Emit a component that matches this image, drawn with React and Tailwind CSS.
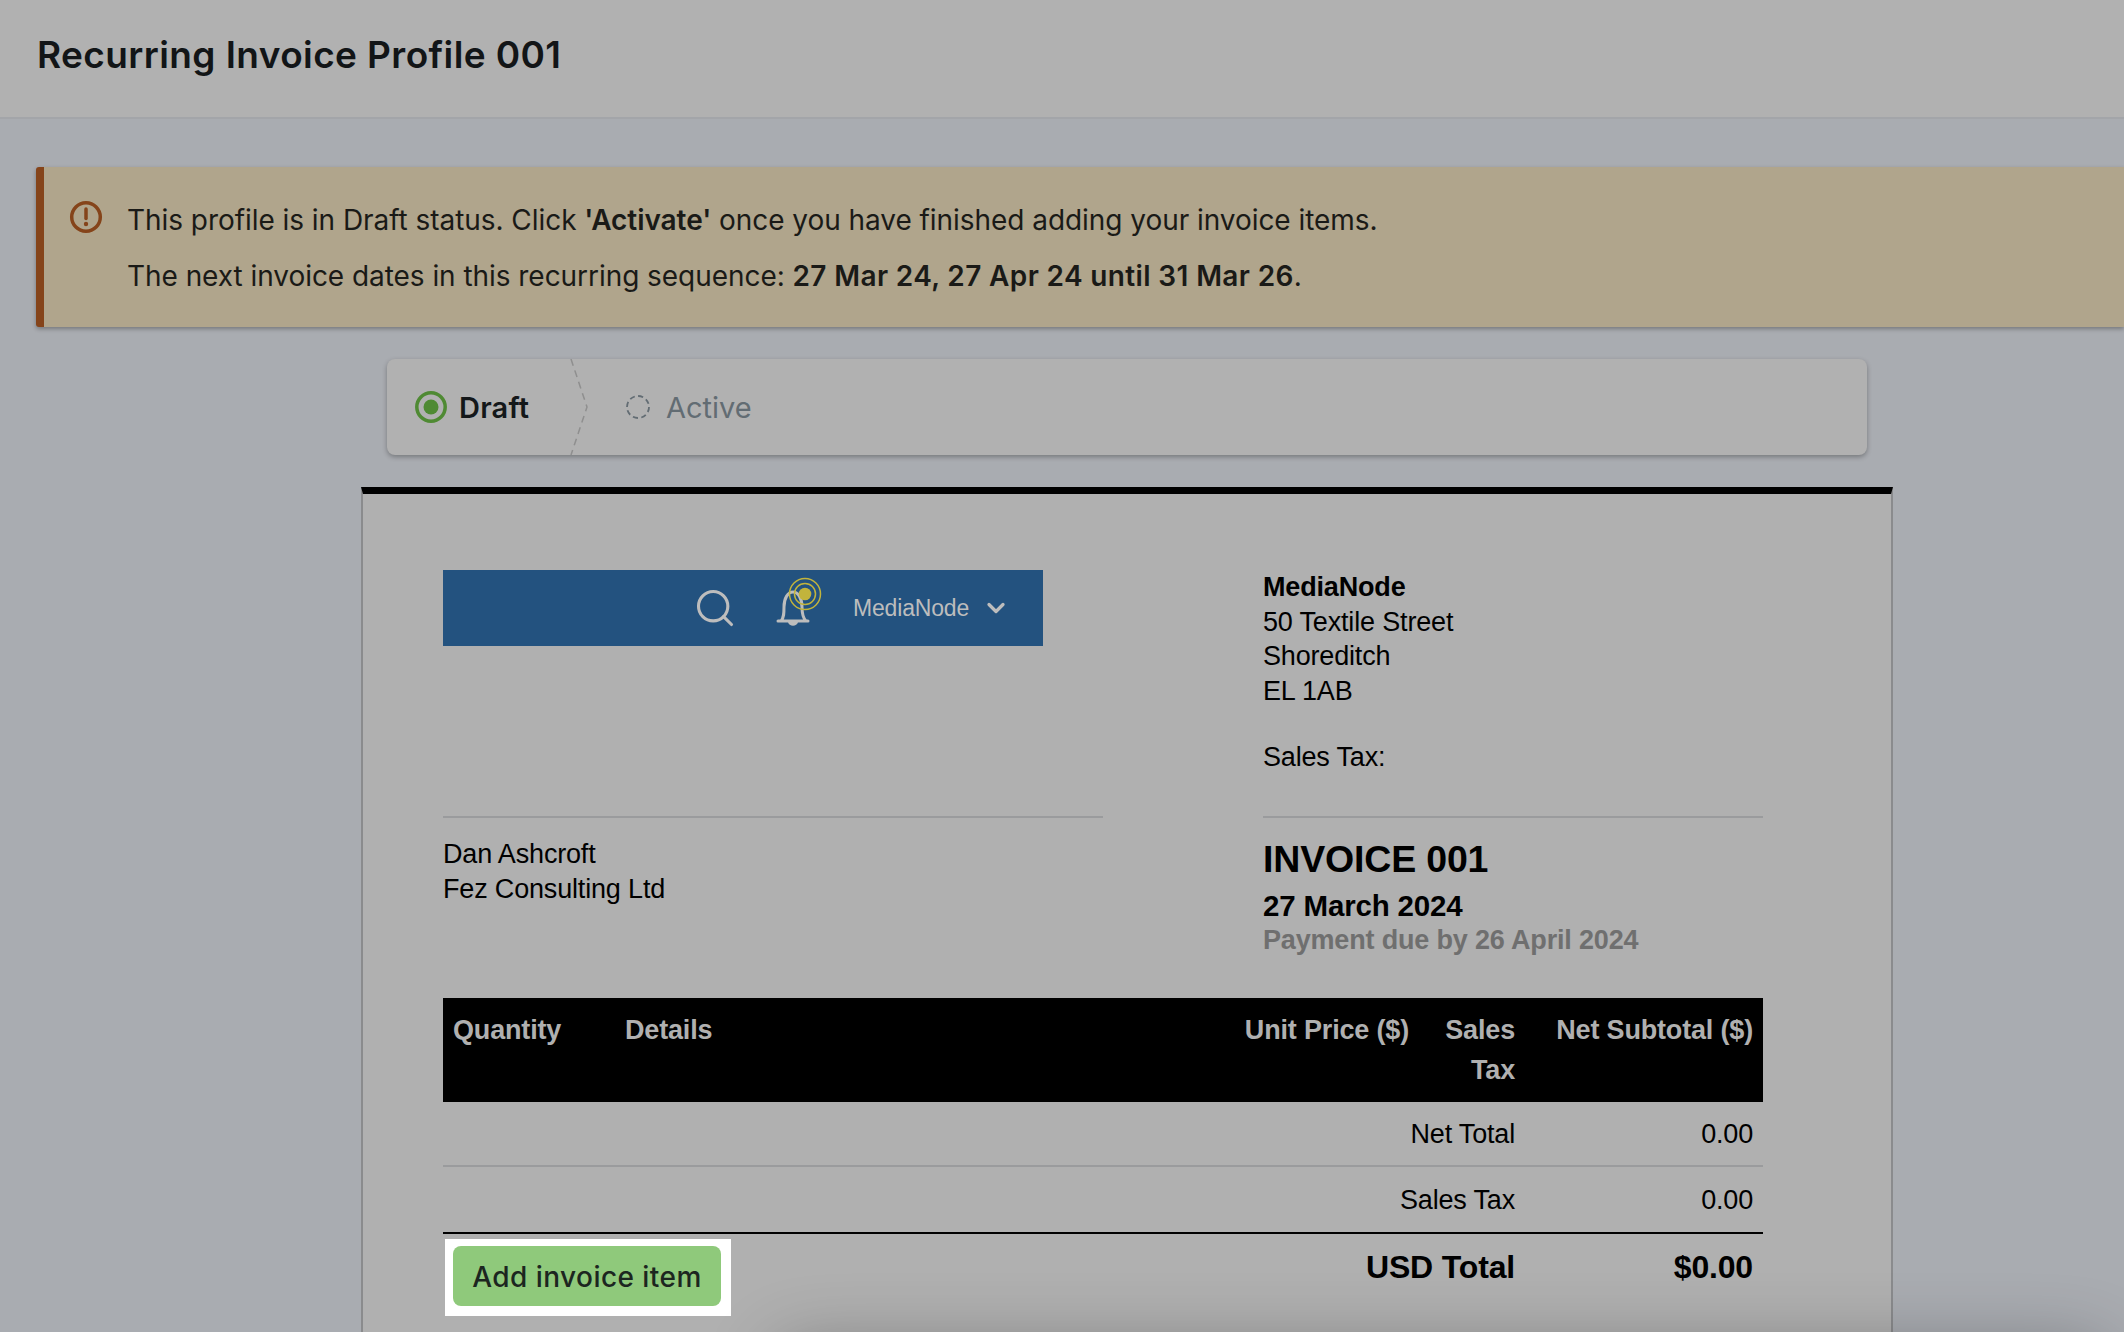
import { ChevronDown, Search } from "lucide-react";

const headFont = "font-['Inter',sans-serif]";
const docFont = "font-['Liberation_Sans',Arial,sans-serif]";

function Bell() {
    return (
        <svg width="50" height="52" viewBox="0 0 50 52" fill="none" className="block">
            <path d="M2 45h30M5 45c3-3 3-8 3-14 0-9 4-15 9-15s9 6 9 15c0 6 1 11 4 14" stroke="#bdbdbd" strokeWidth="3" strokeLinecap="round" strokeLinejoin="round" />
            <path d="M12 46c1 5 9 5 10 0z" fill="#bdbdbd" />
            <circle cx="29" cy="18" r="6.3" fill="#c2b43c" />
            <circle cx="29" cy="18" r="10.5" stroke="#c2b43c" strokeWidth="1.5" />
            <circle cx="29" cy="18" r="15.5" stroke="#c2b43c" strokeWidth="1.5" />
        </svg>
    );
}

function Stepper() {
    return (
        <div className={`ml-[351px] mt-[32px] flex h-[96px] w-[1480px] items-center rounded-lg bg-[#b1b1b1] shadow-[0_2px_5px_rgba(0,0,0,0.3)] ${headFont}`}>
            <svg width="32" height="32" viewBox="0 0 32 32" fill="none" className="ml-[28px]">
                <circle cx="16" cy="16" r="14.2" stroke="#4f8a33" strokeWidth="3.5" />
                <circle cx="16" cy="16" r="7.5" fill="#4f8a33" />
            </svg>
            <span className="ml-[12px] mt-[1px] w-[71px] text-[29px] font-semibold tracking-[0.2px] text-[#14181a]">Draft</span>
            <svg width="20" height="96" viewBox="0 0 20 96" fill="none" className="ml-[39px]">
                <path d="M2 0L18 48L2 96" stroke="#8f8f8f" strokeWidth="1.5" strokeDasharray="7 5" />
            </svg>
            <svg width="26" height="26" viewBox="0 0 26 26" fill="none" className="ml-[36px]">
                <circle cx="13" cy="13" r="11" stroke="#626c73" strokeWidth="1.8" strokeDasharray="5.2 3.4" />
            </svg>
            <span className="ml-[15px] mt-[1px] text-[29px] text-[#626c73]">Active</span>
        </div>
    );
}

function TotalRow({ label, value, border, top }) {
    return (
        <div className={`grid h-[65px] grid-cols-[1fr_237px] text-[27px] leading-[35px] ${top} ${border}`}>
            <div className="pr-[11px] text-right">{label}</div>
            <div className="pr-[10px] text-right">{value}</div>
        </div>
    );
}

export default function App() {
    return (
        <div className="relative h-[1332px] w-full overflow-hidden bg-[#a9acb1]">
            <div className={`flex h-[119px] items-center border-b-2 border-[#a3a5a9] bg-[#b1b1b1] pb-[8px] pl-[37px] text-[37px] font-semibold tracking-[0.4px] text-[#121517] ${headFont}`}>
                Recurring Invoice Profile 001
            </div>

            <div className="pl-[36px] pt-[48px]">
                <div className={`flex h-[160px] rounded-l-[3px] border-l-8 border-[#85441a] bg-[#b0a58c] pl-[25px] pt-[34px] text-[28px] tracking-[-0.05px] text-[#1a1a17] shadow-[0_2px_4px_rgba(0,0,0,0.3)] ${headFont}`}>
                    <svg width="34" height="34" viewBox="0 0 34 34" fill="none" className="mt-[-1px]">
                        <circle cx="17" cy="17" r="14.3" stroke="#85441a" strokeWidth="3.5" />
                        <path d="M17 9v9.5" stroke="#85441a" strokeWidth="3.5" strokeLinecap="round" />
                        <circle cx="17" cy="24" r="2.2" fill="#85441a" />
                    </svg>
                    <div className="ml-[24px] mt-[-9px] leading-[56px]">
                        <p>This profile is in Draft status. Click <b className="font-semibold">'Activate'</b> once you have finished adding your invoice items.</p>
                        <p>The next invoice dates in this recurring sequence: <b className="font-semibold tracking-[0.36px]">27 Mar 24, 27 Apr 24 until 31 Mar 26</b>.</p>
                    </div>
                </div>
                <Stepper />

                <div className={`ml-[325px] mt-[32px] h-[900px] w-[1532px] border-x-2 border-t-[7px] border-x-[#8a8b8d] border-t-black bg-[#b0b0b0] pl-[80px] pr-[128px] pt-[76px] tracking-[-0.17px] text-black ${docFont}`}>
                    <div className="grid grid-cols-[660px_500px] gap-x-[160px]">
                        <div className="h-[246px]">
                            <div className="flex h-[76px] w-[600px] items-center bg-[#23527f] text-[#bdbdbd]">
                                <Search size={44} strokeWidth={1.7} className="ml-[250px]" />
                                <div className="ml-[39px] mt-[-12px]"><Bell /></div>
                                <span className="ml-[27px] w-[116px] text-[23px]">MediaNode</span>
                                <ChevronDown size={28} strokeWidth={2.8} className="ml-[13px]" />
                            </div>
                        </div>
                        <div className="h-[246px] text-[27px] leading-[34.6px]">
                            <p className="font-bold">MediaNode</p>
                            <p>50 Textile Street</p>
                            <p>Shoreditch</p>
                            <p>EL 1AB</p>
                            <p className="mt-[32px]">Sales Tax:</p>
                        </div>
                        <div className="h-[182px] border-t-2 border-[#9a9b9d] pt-[19px] text-[27px] leading-[35px]">
                            <p>Dan Ashcroft</p>
                            <p>Fez Consulting Ltd</p>
                        </div>
                        <div className="h-[182px] border-t-2 border-[#9a9b9d] pt-[18px] font-bold">
                            <p className="text-[37.5px] leading-[46px]">INVOICE 001</p>
                            <p className="mt-[6px] text-[29.5px] leading-[36px]">27 March 2024</p>
                            <p className="text-[27px] leading-[32px] text-[#6f6f6f]">Payment due by 26 April 2024</p>
                        </div>
                    </div>

                    <div className="grid h-[104px] grid-cols-[172px_619px_186px_106px_237px] bg-black pt-[12px] text-[27px] font-bold leading-[40px] text-[#b0b0b0]">
                        <div className="pl-[10px]">Quantity</div>
                        <div className="pl-[10px]">Details</div>
                        <div className="pr-[11px] text-right">Unit Price ($)</div>
                        <div className="pr-[11px] text-right">Sales Tax</div>
                        <div className="pr-[10px] text-right">Net Subtotal ($)</div>
                    </div>
                    <TotalRow label="Net Total" value="0.00" border="border-b-2 border-[#9a9b9d]" top="pt-[15px]" />
                    <TotalRow label="Sales Tax" value="0.00" border="" top="pt-[16px]" />
                    <div className="flex border-t-2 border-black">
                        <div className="ml-[2px] mt-[5px] h-[77px] w-[286px] bg-white px-[8px] py-[7px]">
                            <button className={`h-[60px] w-[268px] rounded-lg bg-[#8fc97b] pt-[2px] text-[28px] font-medium tracking-[0.45px] text-[#1c2620] ${headFont}`}>
                                Add invoice item
                            </button>
                        </div>
                        <div className="flex-1 grid grid-cols-[1fr_237px] pt-[13px] text-[32px] font-bold leading-[40px]">
                            <div className="pr-[11px] text-right">USD Total</div>
                            <div className="pr-[10px] text-right">$0.00</div>
                        </div>
                    </div>
                </div>
            </div>

            <div className="absolute left-[800px] right-[40px] top-[1372px] h-[60px] rounded-lg shadow-[0_0_70px_25px_rgba(0,0,0,0.3)]" />
        </div>
    );
}
